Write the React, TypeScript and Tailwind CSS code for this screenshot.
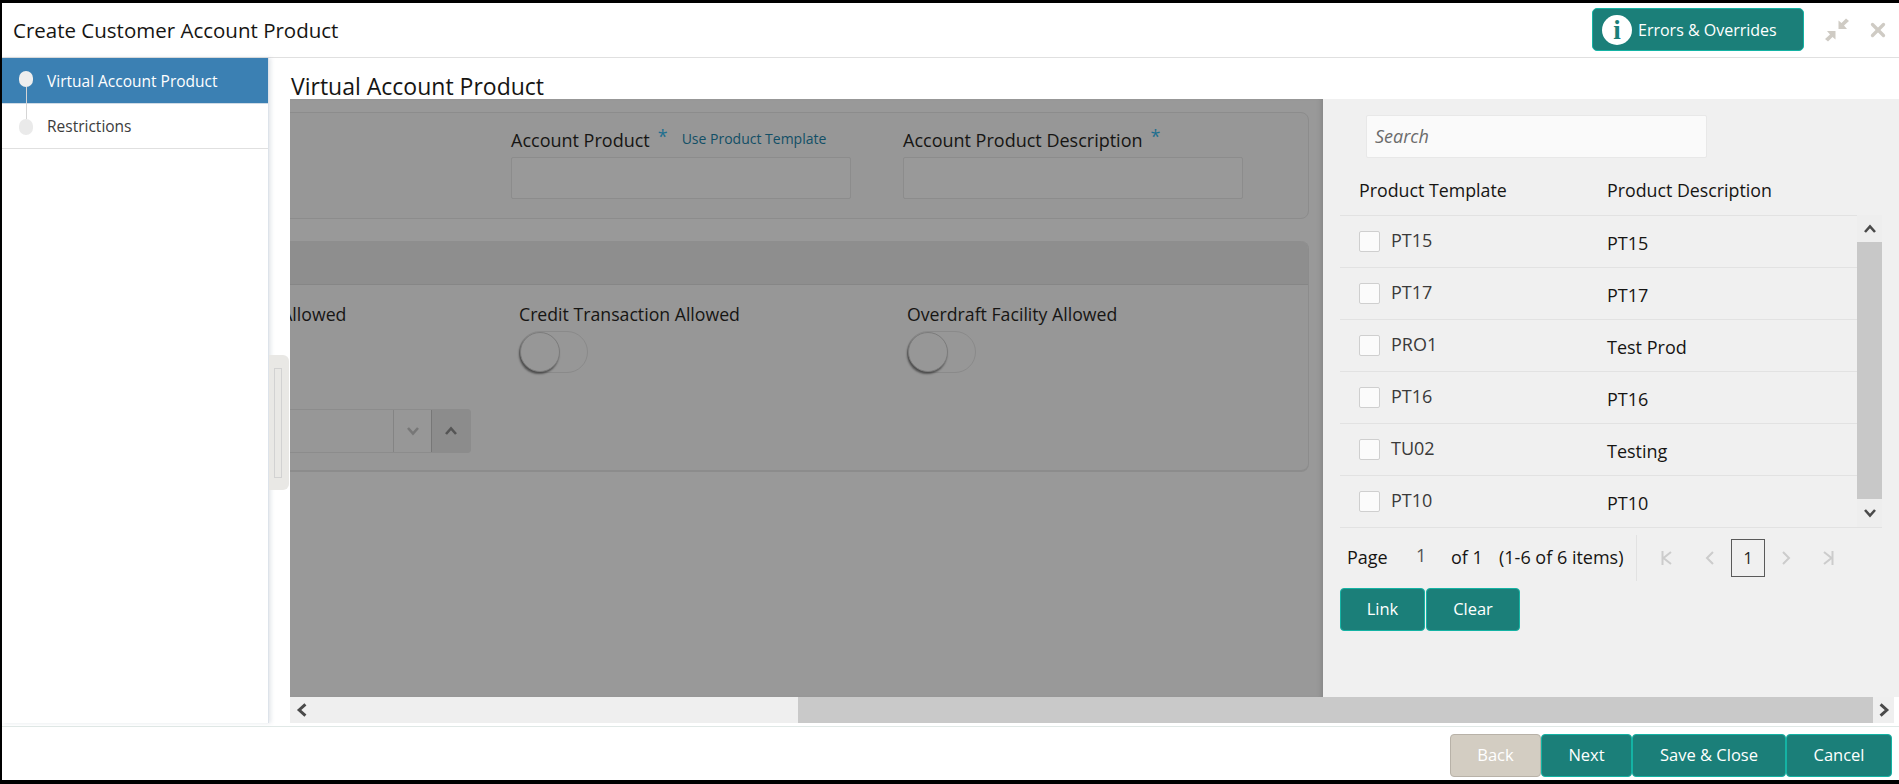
import { X } from 'lucide-react';

const rows = [
  { code: 'PT15', desc: 'PT15' },
  { code: 'PT17', desc: 'PT17' },
  { code: 'PRO1', desc: 'Test Prod' },
  { code: 'PT16', desc: 'PT16' },
  { code: 'TU02', desc: 'Testing' },
  { code: 'PT10', desc: 'PT10' },
];

function Chevron({ dir, className }: { dir: 'up' | 'down' | 'left' | 'right'; className: string }) {
  const paths = {
    up: 'M2 10 L7 4.5 L12 10',
    down: 'M2 4 L7 9.5 L12 4',
    left: 'M10 2 L4.5 7 L10 12',
    right: 'M4 2 L9.5 7 L4 12',
  };
  return (
    <svg viewBox="0 0 14 14" className={className} fill="none" stroke="currentColor" strokeWidth="2.6">
      <path d={paths[dir]} />
    </svg>
  );
}

function PagerIcon({ d, className }: { d: string; className: string }) {
  return (
    <svg viewBox="0 0 11 14" className={`h-[14px] shrink-0 ${className}`} fill="none" stroke="currentColor" strokeWidth="2">
      <path d={d} />
    </svg>
  );
}

function Toggle() {
  return (
    <div className="w-[69px] h-[42px] rounded-full border border-[#8a8a8a] flex items-center">
      <div className="w-[40px] h-[40px] rounded-full border border-[#7c7c7c] bg-[#979797] shadow-[-1px_2px_2px_rgba(0,0,0,0.45)]"></div>
    </div>
  );
}

function TealButton({ label, className }: { label: string; className: string }) {
  return (
    <button className={`h-[43px] rounded-[4px] border border-[#14b3a4] bg-[#1b7f79] text-white text-[16.5px] ${className}`}>
      {label}
    </button>
  );
}

export default function App() {
  return (
    <div className="w-[1899px] h-[784px] bg-black pt-[3px] pl-[2px] pb-[4px] flex flex-col font-['Open_Sans',sans-serif] text-[#161513] overflow-hidden">
      <header className="h-[55px] shrink-0 bg-white border-b border-[#e0e0e0] flex items-center pl-[11px]">
        <h1 className="text-[20.5px] flex-1 mt-[1px]">Create Customer Account Product</h1>
        <button className="w-[212px] h-[43px] -mt-[1px] rounded-[5px] border border-[#14b3a4] bg-[#1b7f79] text-white text-[16px] flex items-center pl-[9px]">
          <span className="w-[30px] h-[30px] rounded-full bg-white text-[#1b7f79] font-['Liberation_Serif',serif] font-bold text-[27px] leading-[30px] text-center">i</span>
          <span className="ml-[6px]">Errors &amp; Overrides</span>
        </button>
        <svg viewBox="0 0 24 24" className="w-[24px] h-[24px] ml-[21px] text-[#cfcbc4]" fill="currentColor">
          <path d="M21 0.500 L16.500 5 L13.500 2.500 L13.500 11 L22 11 L19 7.500 L24 3 Z" />
          <path d="M3 23.500 L7.500 19 L10.500 21.500 L10.500 13 L2 13 L5 16.500 L0 21 Z" />
        </svg>
        <X className="w-[22px] h-[22px] ml-[18px] mr-[10px] text-[#cfcbc4]" strokeWidth={3.6} />
      </header>

      <div className="flex-1 bg-white flex flex-col min-h-0">
        <div className="h-[668px] flex shrink-0 relative">
          <aside className="w-[267px] h-[665px] shrink-0 border-r border-[#dde3ea] shadow-[2px_0_4px_rgba(120,135,155,0.2)]">
            <div className="relative h-[46px] bg-[#3b80b3] border-b border-[#cfdbe6] flex items-center pl-[45px] pt-[2px] text-white text-[15.5px]">
              <span className="absolute left-[17px] top-[13px] w-[14px] h-[16px] rounded-full bg-[#eeeeee]"></span>
              <span className="absolute left-[24px] top-[29px] w-px h-[32px] bg-[#d5d5d5]"></span>
              Virtual Account Product
            </div>
            <div className="relative h-[45px] border-b border-[#e0e0e0] flex items-center pl-[45px] pt-[2px] text-[#3c3c3c] text-[15.5px]">
              <span className="absolute left-[17px] top-[15px] w-[14px] h-[16px] rounded-full bg-[#eaeaea]"></span>
              Restrictions
            </div>
          </aside>

          <div className="absolute left-[267px] top-[297px] w-[20px] h-[135px] rounded-r-[6px] bg-[#e9e8e5] z-10 flex items-center pl-[5px]">
            <div className="w-[8px] h-[110px] border border-[#d2d2d2]"></div>
          </div>

          <main className="flex-1 min-w-0 pl-[21px] flex flex-col">
            <div className="h-[41px] shrink-0 flex items-end pl-[1px] text-[23px] leading-[26px]">
              Virtual Account Product
            </div>

            <div className="h-[598px] shrink-0 flex">
              <section className="w-[1033px] shrink-0 bg-[#999999] overflow-hidden shadow-[inset_-5px_0_5px_-3px_rgba(0,0,0,0.12)] pt-[13px]">
                <div className="w-[1219px] -ml-[200px]">
                  <div className="h-[107px] rounded-[8px] border border-[#8c8c8c] bg-[#979797] flex pl-[420px] pt-[10px]">
                    <div className="w-[392px]">
                      <div className="h-[34px] flex items-center text-[18px]">
                        Account Product
                        <span className="text-[#1f6f8f] text-[18px] ml-[8px] -mt-[7px]">*</span>
                        <span className="text-[#124f66] text-[14px] ml-[14px] -mt-[4px]">Use Product Template</span>
                      </div>
                      <div className="w-[340px] h-[42px] rounded-[2px] border border-[#8c8c8c] bg-[#999999]"></div>
                    </div>
                    <div>
                      <div className="h-[34px] flex items-center text-[18px]">
                        Account Product Description
                        <span className="text-[#1f6f8f] text-[18px] ml-[8px] -mt-[7px]">*</span>
                      </div>
                      <div className="w-[340px] h-[42px] rounded-[2px] border border-[#8c8c8c] bg-[#999999]"></div>
                    </div>
                  </div>

                  <div className="mt-[22px] h-[231px] rounded-[8px] border-b-[2px] border-x border-[#8c8c8c] bg-[#979797]">
                    <div className="h-[44px] rounded-t-[8px] bg-[#8e8e8e] border-b border-[#868686]"></div>
                    <div className="flex pl-[40px] pt-[17px]">
                      <div className="w-[388px]">
                        <div className="text-[17.7px] leading-[24px] h-[29px]">Debit Transaction Allowed</div>
                      </div>
                      <div className="w-[388px]">
                        <div className="text-[17.7px] leading-[24px] h-[29px]">Credit Transaction Allowed</div>
                        <Toggle />
                      </div>
                      <div>
                        <div className="text-[17.7px] leading-[24px] h-[29px]">Overdraft Facility Allowed</div>
                        <Toggle />
                      </div>
                    </div>
                    <div className="ml-[34px] mt-[36px] w-[346px] h-[44px] flex rounded-[3px] border border-[#8c8c8c]">
                      <div className="flex-1"></div>
                      <div className="w-[38px] border-l border-[#848484] flex items-center justify-center">
                        <Chevron dir="down" className="w-[14px] h-[14px] text-[#777777]" />
                      </div>
                      <div className="w-[39px] border-l border-[#777777] bg-[#8c8c8c] flex items-center justify-center">
                        <Chevron dir="up" className="w-[14px] h-[14px] text-[#555555]" />
                      </div>
                    </div>
                  </div>
                </div>
              </section>

              <section className="flex-1 min-w-0 bg-[#f0f0f0] pl-[17px] pr-[17px]">
                <div className="pl-[26px] pt-[16px]">
                  <div className="w-[341px] h-[43px] rounded-[2px] border border-[#e8e8e8] bg-[#fafafa] flex items-center pl-[8px] italic text-[#6b6b6b] text-[18px]">
                    Search
                  </div>
                </div>
                <div className="h-[57px] flex items-center text-[17.8px] pt-[7px]">
                  <div className="w-[267px] pl-[19px]">Product Template</div>
                  <div>Product Description</div>
                </div>
                <div className="flex border-b border-[#e2e2e2]">
                  <div className="flex-1 border-t border-[#e2e2e2]">
                    {rows.map((row, i) => (
                      <div key={row.code} className={`flex text-[18px] ${i < 5 ? 'h-[52px] border-b border-[#e2e2e2]' : 'h-[51px]'}`}>
                        <div className="w-[267px] pl-[19px] flex items-start">
                          <span className="w-[21px] h-[21px] mt-[15px] rounded-[2px] border border-[#cfcfcf] bg-[#fbfbfb]"></span>
                          <span className="ml-[11px] mt-[11px] text-[#3a3a3a]">{row.code}</span>
                        </div>
                        <div className="pt-[14px]">{row.desc}</div>
                      </div>
                    ))}
                  </div>
                  <div className="w-[25px] shrink-0 flex flex-col bg-[#eeeeee]">
                    <div className="h-[27px] flex items-center justify-center">
                      <Chevron dir="up" className="w-[14px] h-[14px] text-[#4a4a4a]" />
                    </div>
                    <div className="h-[257px] bg-[#c8c8c8]"></div>
                    <div className="flex-1 flex items-center justify-center">
                      <Chevron dir="down" className="w-[14px] h-[14px] text-[#4a4a4a]" />
                    </div>
                  </div>
                </div>
                <div className="h-[60px] flex items-center text-[18px]">
                  <span className="ml-[7px] w-[69px] -mt-[1px]">Page</span>
                  <span className="w-[35px] -mt-[6px] text-[#555555]">1</span>
                  <span className="w-[48px] -mt-[1px]">of 1</span>
                  <span className="w-[137px] -mt-[1px] whitespace-nowrap">(1-6 of 6 items)</span>
                  <span className="h-[46px] border-l border-[#e2e2e2]"></span>
                  <div className="flex items-center text-[#cccccc]">
                    <PagerIcon d="M1.500 0 V14 M10 1 L2.500 7 L10 13" className="w-[11px] ml-[24px]" />
                    <PagerIcon d="M8 1 L2 7 L8 13" className="w-[11px] ml-[33px]" />
                    <span className="w-[34px] h-[38px] ml-[15px] border border-[#5a5a5a] text-[#222222] flex items-center justify-center text-[16px]">1</span>
                    <PagerIcon d="M3 1 L9 7 L3 13" className="w-[11px] ml-[15px]" />
                    <PagerIcon d="M9.500 0 V14 M1 1 L8.500 7 L1 13" className="w-[11px] ml-[32px]" />
                  </div>
                </div>
                <div className="flex gap-px">
                  <TealButton label="Link" className="w-[85px]" />
                  <TealButton label="Clear" className="w-[94px]" />
                </div>
              </section>
            </div>

            <div className="h-[26px] w-[1604px] shrink-0 flex bg-[#efefef]">
              <div className="w-[508px] flex items-center pl-[4px]">
                <Chevron dir="left" className="w-[16px] h-[16px] text-[#4a4a4a]" />
              </div>
              <div className="flex-1 bg-[#c9c9c9]"></div>
              <div className="w-[21px] flex items-center justify-center">
                <Chevron dir="right" className="w-[16px] h-[16px] text-[#4a4a4a]" />
              </div>
            </div>
          </main>
        </div>

        <footer className="flex-1 border-t border-[#e0e8e6] flex justify-end items-start pt-[7px] pr-[7px]">
          <button className="w-[91px] h-[43px] rounded-[4px] border border-[#b8b2a8] bg-[#d3cdc2] text-white text-[16.5px]">Back</button>
          <TealButton label="Next" className="w-[91px]" />
          <TealButton label="Save & Close" className="w-[154px]" />
          <TealButton label="Cancel" className="w-[106px]" />
        </footer>
      </div>
    </div>
  );
}
